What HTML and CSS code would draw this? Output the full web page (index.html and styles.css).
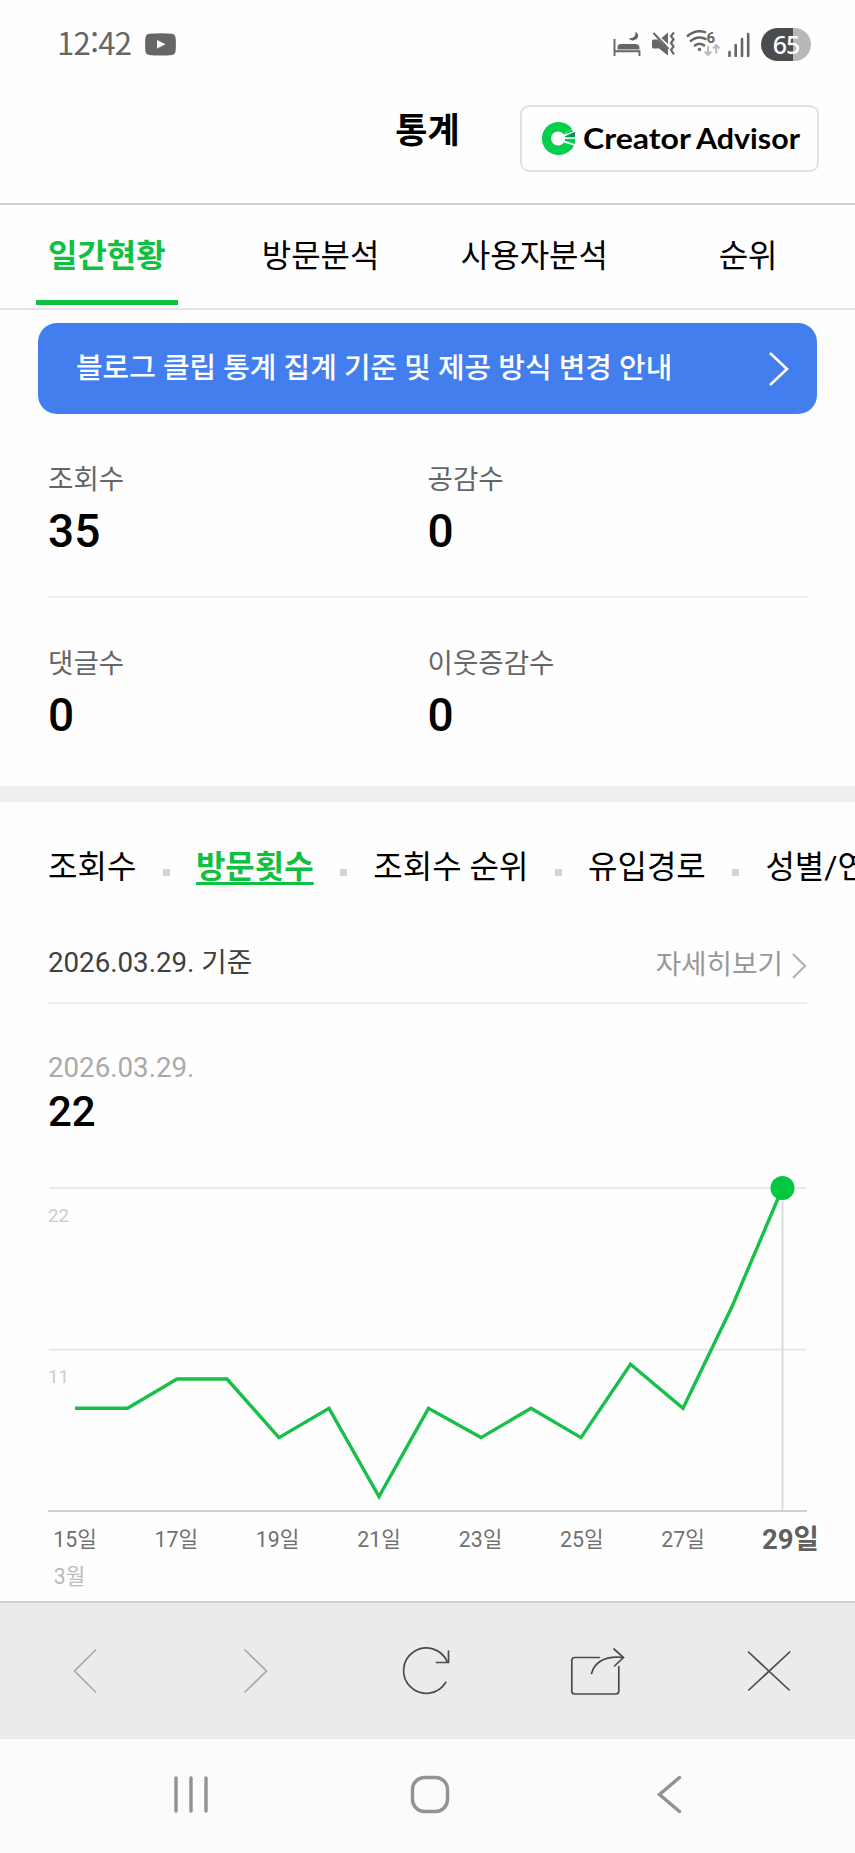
FILE: index.html
```html
<!DOCTYPE html>
<html lang="ko">
<head>
  <meta charset="UTF-8" />
  <meta name="viewport" content="width=device-width, initial-scale=1.0"/>
  <title>통계</title>
  <link rel="stylesheet" href="styles.css">
</head>
<body>

  <!-- Status Bar -->
  <div class="status-bar">
    <span class="clock">12:42</span>
    <svg class="youtube" width="31" height="23" viewBox="0 0 31 23">
      <path d="M4 .8Q15.500 -.4 27 .8Q30.200 1.200 30.600 5Q31.200 11.500 30.600 18Q30.200 21.600 27 22Q15.500 23.200 4 22Q.8 21.600 .4 18Q-.2 11.500 .4 5Q.8 1.200 4 .8Z" fill="#666"/>
      <path d="M12 7L20.500 11.300L12 15.600Z" fill="#fff"/>
    </svg>
    <div class="status-icons">
      <svg width="28" height="26" viewBox="0 0 28 26">
        <path d="M1.500 8V25M1.500 20.300H26.500V25" fill="none" stroke="#666" stroke-width="1.900"/>
        <path d="M4.500 18.500V16Q4.500 13 8 13H22Q26.500 13 26.500 17V18.500Z" fill="#666"/>
        <path d="M22.500 .5Q27.500 4.500 23.500 8Q19.500 11 15.500 7.500Q23 7.500 22.500 .5Z" fill="#666"/>
      </svg>
      <svg width="25" height="26" viewBox="0 0 25 26">
        <path d="M1 10Q1 8.500 2.500 8.500H7L17 18.500V24.500L8 17.500H2.500Q1 17.500 1 16Z" fill="#666"/>
        <path d="M10.500 7L17 1.500V13Z" fill="#666"/>
        <path d="M2.500 2L17.500 18" stroke="#666" stroke-width="2"/>
        <path d="M23 1.500L20 5L22.500 8.500L20 12L22.500 15.500L20 19L23 23.500" fill="none" stroke="#666" stroke-width="2.200"/>
      </svg>
      <svg width="35" height="28" viewBox="0 0 35 28">
        <path d="M1 6.500Q10 -1.500 20 2.500M4 11.500Q12 4.500 20.500 9.500M8 16Q13.500 11.500 19 16" fill="none" stroke="#666" stroke-width="2.400"/>
        <circle cx="13.500" cy="19.500" r="1.700" fill="#666"/>
        <text class="wifi-number" x="20.500" y="13">6</text>
        <path d="M22 16V25M18.800 21.500L22 25L25.200 21.500M30.200 23.500V15.500M27 18.500L30.200 15L33.400 18.500" fill="none" stroke="#bbb" stroke-width="2"/>
      </svg>
      <svg class="signal" width="22" height="25" viewBox="0 0 22 25">
        <path d="M1.500 20V24M7.700 13V24M14 7V24M20.200 2V24" stroke="#666" stroke-width="2.600" stroke-linecap="round"/>
      </svg>
      <span class="battery">65</span>
    </div>
  </div>

  <!-- Header -->
  <header class="header">
    <h1>통계</h1>
    <a class="advisor" href="#">
      <svg width="260" height="44" viewBox="0 0 260 44">
        <circle cx="17.500" cy="21.500" r="16.600" fill="#03cf4d"/>
        <path d="M20 19L33 10.500L36 15.500V27L32 32.500L20 24Z" fill="#fff"/>
        <path d="M22 18L30 12.500Q31.500 13 32 14.500Z" fill="#03cf4d"/>
        <path d="M22.500 20L34 14.800V20.200H24.500Z" fill="#0a8f55"/>
        <path d="M24.500 21.800H34V27L22.500 23.500Z" fill="#03cf4d"/>
        <path d="M21 25L33 28.500Q32 31 30 33Z" fill="#03cf4d"/>
        <circle cx="17" cy="21.500" r="7" fill="#fff"/>
        <text class="logo-text" x="42" y="31.500" textLength="108" lengthAdjust="spacingAndGlyphs">Creator</text>
        <text class="logo-text" x="155" y="31.500" textLength="104" lengthAdjust="spacingAndGlyphs">Advisor</text>
      </svg>
    </a>
  </header>

  <!-- Tabs -->
  <nav class="tabs">
    <a class="tab active" href="#">일간현황</a>
    <a class="tab" href="#">방문분석</a>
    <a class="tab" href="#">사용자분석</a>
    <a class="tab" href="#">순위</a>
  </nav>

  <a class="banner" href="#">
    <span>블로그 클립 통계 집계 기준 및 제공 방식 변경 안내</span>
    <svg width="22" height="36" viewBox="0 0 22 36">
      <path d="M2 2L19 18L2 34" fill="none" stroke="#fff" stroke-width="2.600"/>
    </svg>
  </a>

  <!-- Daily Summary -->
  <section class="summary">
    <div class="summary-row">
      <div class="stat"><h4>조회수</h4><p>35</p></div>
      <div class="stat"><h4>공감수</h4><p>0</p></div>
    </div>
    <div class="summary-row">
      <div class="stat"><h4>댓글수</h4><p>0</p></div>
      <div class="stat"><h4>이웃증감수</h4><p>0</p></div>
    </div>
  </section>

  <!-- Chart Menu -->
  <nav class="sub-nav">
    <a href="#">조회수</a>
    <a class="active" href="#">방문횟수</a>
    <a href="#">조회수 순위</a>
    <a href="#">유입경로</a>
    <a href="#">성별/연령</a>
  </nav>

  <!-- Visits -->
  <section class="visits">
    <div class="visits-head">
      <span class="base-date">2026.03.29. 기준</span>
      <a class="more" href="#"><span>자세히보기</span>
        <svg width="16" height="28" viewBox="0 0 16 28">
          <path d="M2 2L14 14L2 26" fill="none" stroke="#b4b4b4" stroke-width="2.400"/>
        </svg>
      </a>
    </div>
    <p class="picked-date">2026.03.29.</p>
    <p class="picked-value">22</p>

    <svg class="chart" width="855" height="430" viewBox="0 0 855 430">
      <path class="grid" d="M49 17H806M49 178.700H806"/>
      <path class="cursor" d="M782.500 17V340"/>
      <path class="axis" d="M48 340H807"/>
      <text class="y-label" x="48" y="50.700">22</text>
      <text class="y-label" x="48" y="212.300">11</text>
      <polyline class="line" points="75,237.300 127.500,237.300 177,208 227,208 279,266.600 329,237.300 379,325.500 428.500,237.300 481,266.600 531,237.300 581,266.600 630.500,193.300 683,237.300 732.500,134.500 782.500,17"/>
      <circle cx="782.500" cy="17" r="12" fill="#03c83d"/>
      <g class="x-labels">
        <text x="75" y="375.500">15일</text>
        <text x="176.300" y="375.500">17일</text>
        <text x="277.500" y="375.500">19일</text>
        <text x="379" y="375.500">21일</text>
        <text x="480.500" y="375.500">23일</text>
        <text x="581.800" y="375.500">25일</text>
        <text x="683" y="375.500">27일</text>
        <text class="today" x="790.500" y="377.500">29일</text>
        <text class="month" x="69.500" y="413.300">3월</text>
      </g>
    </svg>
  </section>

  <!-- Browser Toolbar -->
  <div class="toolbar">
    <svg class="off" viewBox="0 0 60 60"><path d="M40.500 9L19.500 30L40.500 51"/></svg>
    <svg class="off" viewBox="0 0 60 60"><path d="M19 9L40.500 30L19 51"/></svg>
    <svg viewBox="0 0 60 60"><path d="M50.300 21A22.700 22.700 0 1 0 48.800 41.300M51.500 10V21.500H39.500"/></svg>
    <svg viewBox="0 0 60 60"><path d="M31.500 16.500H6.800Q3.800 16.500 3.800 19.500V50Q3.800 53 6.800 53H47.800Q50.800 53 50.800 50V25.700M23.500 32.500Q29 14 55 16.500M46 8L55.500 16.500L46.500 25"/></svg>
    <svg viewBox="0 0 60 60"><path d="M9.500 11L50.200 49M50.700 11L9.800 49"/></svg>
  </div>

  <!-- Phone Navigation -->
  <div class="phone-nav">
    <svg viewBox="0 0 60 60"><path d="M15 14V47M30 14V47M45 14V47"/></svg>
    <svg viewBox="0 0 60 60"><rect x="12.500" y="13.500" width="35" height="34" rx="12"/></svg>
    <svg viewBox="0 0 60 60"><path d="M39.500 13.500L19.500 30.500L39.500 47.500"/></svg>
  </div>

</body>
</html>
```
FILE: styles.css
```css
* {
  margin: 0;
  padding: 0;
  box-sizing: border-box;
}

body {
  width: 855px;
  height: 1853px;
  overflow: hidden;
  background: #fefefe;
  color: #000;
  font-family: Roboto, 'Noto Sans CJK KR', sans-serif;
}

a {
  color: inherit;
  text-decoration: none;
}

svg {
  display: block;
  flex-shrink: 0;
}

/* Status Bar */
.status-bar {
  display: flex;
  align-items: center;
  height: 88px;
  padding: 0 44px 0 57px;
}

.clock {
  width: 88px;
  padding-bottom: 4px;
  font-family: 'Noto Sans CJK KR', sans-serif;
  font-size: 31px;
  line-height: 40px;
  letter-spacing: -0.6px;
  color: #666;
}

.status-icons {
  display: flex;
  align-items: center;
  gap: 10px;
  margin-left: auto;
}

.status-icons .signal {
  margin: 0 1px 0 -3px;
}

.wifi-number {
  font-size: 15px;
  font-weight: 700;
  fill: #666;
}

.battery {
  width: 50px;
  height: 33px;
  border-radius: 17px;
  background: linear-gradient(to right, #4c4c4c 32px, #b8b8b8 32px);
  color: #fff;
  font-family: 'Noto Sans', sans-serif;
  font-size: 25px;
  font-weight: 500;
  line-height: 33px;
  letter-spacing: -1px;
  text-align: center;
}

/* Header */
.header {
  display: grid;
  grid-template-columns: 1fr auto 1fr;
  height: 117px;
  padding: 17px 36px 0;
  border-bottom: 2px solid #d0d0d0;
}

.header h1 {
  grid-column: 2;
  font-size: 35px;
  font-weight: 700;
  line-height: 53px;
}

.advisor {
  justify-self: end;
  width: 299px;
  height: 67px;
  padding: 10px 0 0 19px;
  border: 2px solid #e0e0e0;
  border-radius: 9px;
}

.logo-text {
  font-family: Lato, sans-serif;
  font-size: 29px;
  font-weight: 700;
}

/* Tabs */
.tabs {
  display: grid;
  grid-template-columns: repeat(4, 1fr);
  justify-items: center;
  height: 105px;
  border-bottom: 2px solid #e4e4e4;
}

.tab {
  height: 100px;
  padding: 0 12px;
  font-size: 32px;
  line-height: 102px;
}

.tab.active {
  border-bottom: 5px solid #10c040;
  color: #10c040;
  font-weight: 700;
}

/* Notice Banner */
.banner {
  display: flex;
  align-items: center;
  justify-content: space-between;
  width: 779px;
  height: 91px;
  margin: 13px 38px 0;
  padding: 0 27px 0 38px;
  border-radius: 19px;
  background: #437eee;
  color: #fff;
  font-size: 28.9px;
  font-weight: 500;
}

.banner span {
  padding-bottom: 7px;
}

/* Daily Summary */
.summary {
  height: 388px;
  padding: 0 48px;
  border-bottom: 16px solid #eee;
}

.summary-row {
  display: grid;
  grid-template-columns: 1fr 1fr;
  height: 184px;
  padding-top: 45px;
}

.summary-row:first-child {
  border-bottom: 2px solid #f0f0f0;
}

.stat h4 {
  font-size: 27.6px;
  font-weight: 400;
  line-height: 41px;
  color: #666;
}

.stat p {
  font-size: 46px;
  font-weight: 500;
  line-height: 62px;
}

/* Chart Menu */
.sub-nav {
  display: flex;
  height: 130px;
  padding-left: 48px;
  font-size: 32px;
  line-height: 130px;
  white-space: nowrap;
}

.sub-nav a + a::before {
  content: '';
  display: inline-block;
  width: 7px;
  height: 7px;
  margin: 0 26.3px;
  background: #d4d4d4;
  vertical-align: 2px;
}

.sub-nav a.active {
  color: #10c040;
  font-weight: 700;
  text-decoration: underline;
  text-underline-offset: 4px;
}

/* Visits */
.visits-head {
  display: flex;
  align-items: center;
  justify-content: space-between;
  height: 72px;
  margin: 0 48px;
  border-bottom: 2px solid #eee;
  font-size: 27.7px;
}

.base-date {
  padding-bottom: 14px;
  color: #404040;
}

.more {
  display: flex;
  align-items: center;
  gap: 8px;
  color: #999;
}

.more span {
  padding-bottom: 11px;
}

.more svg {
  margin-top: -2px;
}

.picked-date {
  margin: 44px 48px 0;
  font-size: 27.7px;
  line-height: 40px;
  color: #aaa;
}

.picked-value {
  margin-left: 48px;
  font-size: 42px;
  font-weight: 500;
  line-height: 48px;
}

.chart {
  margin-top: 35px;
}

.grid, .cursor, .axis {
  fill: none;
  stroke: #e8e8e8;
  stroke-width: 2;
}

.cursor {
  stroke: #dcdcdc;
}

.axis {
  stroke: #d0d0d0;
}

.line {
  fill: none;
  stroke: #18bf48;
  stroke-width: 3.4;
}

.y-label {
  font-size: 18.7px;
  fill: #ccc;
}

.x-labels {
  font-size: 21.3px;
  fill: #707070;
  text-anchor: middle;
}

.x-labels .today {
  font-size: 27.5px;
  font-weight: 700;
  fill: #606060;
}

.x-labels .month {
  fill: #bbb;
}

/* Browser Toolbar */
.toolbar {
  display: grid;
  grid-template-columns: repeat(5, 1fr);
  align-items: center;
  justify-items: center;
  height: 138px;
  padding-right: 1px;
  border-top: 2px solid #d0d0d0;
  background: #ebebeb;
}

.toolbar svg {
  width: 60px;
  height: 60px;
  fill: none;
  stroke: #4c4c4c;
  stroke-width: 1.7;
  stroke-linecap: round;
}

.toolbar .off {
  stroke: #aaa;
}

/* Phone Navigation */
.phone-nav {
  display: grid;
  grid-template-columns: repeat(3, 1fr);
  justify-items: center;
  height: 114px;
  padding: 25px 65px 0 71px;
  background: #fbfbfb;
}

.phone-nav svg {
  width: 60px;
  height: 60px;
  fill: none;
  stroke: #929292;
  stroke-width: 3.4;
  stroke-linecap: round;
}
```
